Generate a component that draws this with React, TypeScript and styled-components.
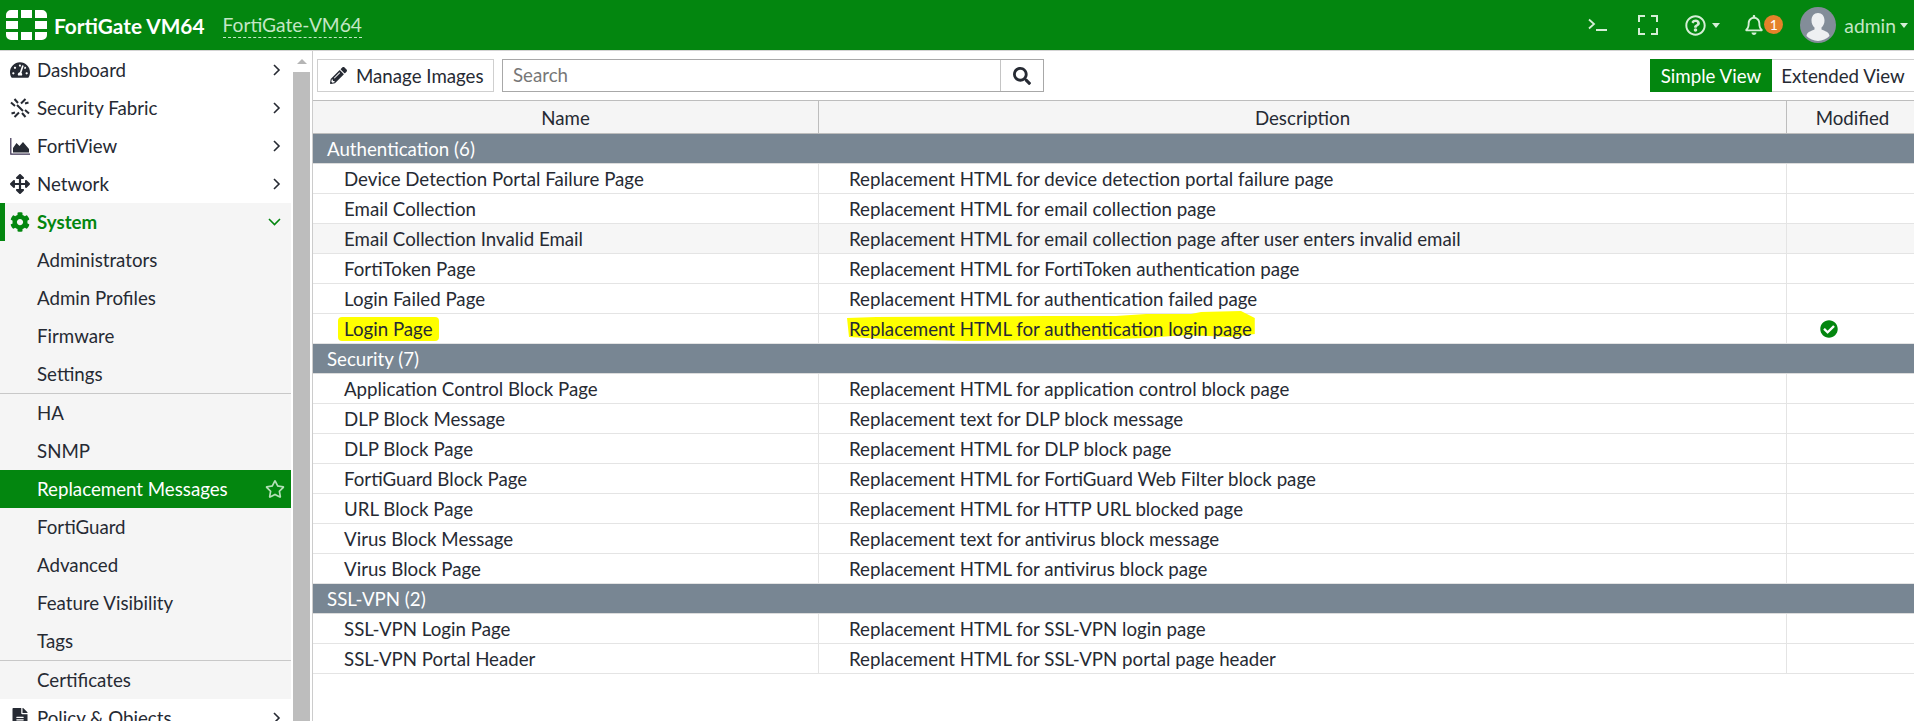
import React from 'react';
import styled, { createGlobalStyle } from 'styled-components';
import {
  FaArrowsAlt,
  FaCheckCircle,
  FaCog,
  FaFileAlt,
  FaPencilAlt,
  FaRegBell,
  FaRegQuestionCircle,
  FaRegStar,
  FaSearch,
  FaTachometerAlt,
} from 'react-icons/fa';

const GREEN = '#03860f';
const TEXT = '#262a33';

const GlobalStyle = createGlobalStyle`
  html, body {
    margin: 0;
    padding: 0;
    height: 100%;
    overflow: hidden;
    background: #fff;
    font-family: Lato, "Liberation Sans", sans-serif;
    font-size: 18.7px;
    color: ${TEXT};
  }
`;

const Page = styled.div`
  display: flex;
  flex-direction: column;
  width: 1914px;
  height: 721px;
  overflow: hidden;
`;

const TopBar = styled.header`
  display: flex;
  align-items: center;
  flex: 0 0 51px;
  box-sizing: border-box;
  padding: 0 6px 0 6px;
  background: ${GREEN};
  color: #c4e6c6;
  border-bottom: 1px solid #d4d4d4;
`;

const Logo = styled.svg`
  width: 41px;
  height: 30px;
  margin-right: 7px;
  fill: #fff;
`;

const Product = styled.span`
  font-weight: 700;
  font-size: 20.8px;
  color: #fff;
  margin-right: 18px;
`;

const Hostname = styled.span`
  font-size: 19.2px;
  color: #c4e6c6;
  padding-bottom: 1px;
  border-bottom: 1px dashed #c4e6c6;
`;

const TopActions = styled.div`
  display: flex;
  align-items: center;
  margin-left: auto;
`;

const TopIcon = styled.span<{ $w: number }>`
  display: flex;
  align-items: center;
  width: ${(p) => p.$w}px;
`;

const Caret = styled.span<{ $gap?: number }>`
  display: inline-block;
  margin-left: ${(p) => p.$gap ?? 0}px;
  border-left: 4.5px solid transparent;
  border-right: 4.5px solid transparent;
  border-top: 5px solid #d5eed6;
`;

const Badge = styled.span`
  position: absolute;
  left: 20px;
  top: 0;
  width: 19px;
  height: 19px;
  border-radius: 50%;
  background: #e5822a;
  color: #fff;
  font-size: 14px;
  line-height: 19px;
  text-align: center;
`;

const BellWrap = styled.span`
  position: relative;
  display: flex;
  width: 56px;
`;

const Avatar = styled.svg`
  width: 36px;
  height: 36px;
  margin-right: 8px;
`;

const AdminName = styled.span`
  font-size: 19.3px;
  margin-right: 4px;
  color: #c4e6c6;
`;

const Body = styled.div`
  display: flex;
  flex: 1;
  min-height: 0;
`;

const Sidebar = styled.nav`
  flex: 0 0 291px;
  overflow: hidden;
`;

const NavItem = styled.div<{ $open?: boolean; $sub?: boolean; $active?: boolean }>`
  display: flex;
  align-items: center;
  height: 38px;
  padding: ${(p) => (p.$sub ? '0 6px 0 37px' : '0 10px 0 10px')};
  background: ${(p) => (p.$active ? GREEN : p.$sub || p.$open ? '#f5f5f5' : '#fff')};
  color: ${(p) => (p.$active ? '#fff' : p.$open ? GREEN : TEXT)};
  font-weight: ${(p) => (p.$open ? 700 : 400)};
  ${(p) => p.$open && `box-shadow: inset 5px 0 0 ${GREEN};`}
`;

const SubDivider = styled.div`
  height: 1px;
  background: #c8c8c8;
`;

const NavIcon = styled.span`
  display: flex;
  justify-content: center;
  width: 20px;
  margin-right: 7px;
  font-size: 20px;
`;

const NavTail = styled.span`
  display: flex;
  margin-left: auto;
`;

const StarIcon = styled(FaRegStar)`
  font-size: 20px;
  color: #b5e0b8;
`;

const ScrollTrack = styled.div`
  display: flex;
  flex-direction: column;
  flex: 0 0 22px;
  box-sizing: border-box;
  padding: 0 2px;
  border-right: 1px solid #cccccc;
`;

const ScrollArrow = styled.div`
  display: flex;
  justify-content: center;
  align-items: center;
  height: 21px;
  &::before {
    content: '';
    border-left: 5px solid transparent;
    border-right: 5px solid transparent;
    border-bottom: 5px solid #b5b5b5;
  }
`;

const ScrollThumb = styled.div`
  flex: 1;
  background: #bdbdbd;
`;

const Content = styled.main`
  flex: 1;
  min-width: 0;
  display: flex;
  flex-direction: column;
`;

const Toolbar = styled.div`
  display: flex;
  align-items: center;
  height: 49px;
  padding: 0 0 0 4px;
  gap: 8px;
`;

const ToolButton = styled.button`
  display: flex;
  align-items: center;
  gap: 9px;
  height: 33px;
  width: 177px;
  padding: 0 0 0 12px;
  background: #fff;
  border: 1px solid #cfcfcf;
  color: ${TEXT};
  font: inherit;
  white-space: nowrap;
`;

const SearchBox = styled.div`
  display: flex;
  height: 33px;
  width: 542px;
  box-sizing: border-box;
  border: 1px solid #a8a8a8;
`;

const SearchInput = styled.div`
  flex: 1;
  padding-left: 10px;
  line-height: 31px;
  color: #777;
`;

const SearchButton = styled.div`
  display: flex;
  align-items: center;
  justify-content: center;
  width: 42px;
  border-left: 1px solid #c4c4c4;
  color: ${TEXT};
  font-size: 18px;
`;

const ViewSwitch = styled.div`
  display: flex;
  margin-left: auto;
  height: 33px;
`;

const ViewTab = styled.div<{ $on?: boolean }>`
  display: flex;
  align-items: center;
  justify-content: center;
  box-sizing: border-box;
  width: ${(p) => (p.$on ? 122 : 142)}px;
  background: ${(p) => (p.$on ? GREEN : '#fff')};
  color: ${(p) => (p.$on ? '#fff' : TEXT)};
  border: ${(p) => (p.$on ? 'none' : '1px solid #cfcfcf')};
  border-left: none;
  border-right: none;
`;

const Cols = styled.div`
  display: grid;
  grid-template-columns: 506px 968px 127px;
`;

const HeadRow = styled(Cols)`
  height: 34px;
  box-sizing: border-box;
  background: #f5f5f5;
  border-top: 1px solid #bdbdbd;
  border-bottom: 1px solid #bdbdbd;
`;

const HeadCell = styled.div<{ $last?: boolean }>`
  display: flex;
  align-items: center;
  justify-content: center;
  padding-top: 1px;
  padding-left: ${(p) => (p.$last ? 4 : 0)}px;
  border-right: ${(p) => (p.$last ? 'none' : '1px solid #bdbdbd')};
`;

const GroupRow = styled.div`
  box-sizing: border-box;
  height: 30px;
  padding-left: 14px;
  line-height: 31px;
  background: #788693;
  color: #fff;
  border-bottom: 1px solid #dcdcdc;
`;

const DataRow = styled(Cols)<{ $alt?: boolean }>`
  box-sizing: border-box;
  height: 30px;
  background: ${(p) => (p.$alt ? '#f6f6f6' : '#fff')};
  border-bottom: 1px solid #e4e4e4;
`;

const DataCell = styled.div<{ $pad?: number; $last?: boolean }>`
  display: flex;
  align-items: center;
  padding-top: 1px;
  padding-left: ${(p) => p.$pad ?? 0}px;
  border-right: ${(p) => (p.$last ? 'none' : '1px solid #e4e4e4')};
`;

// hand-painted yellow marker sitting behind the text, as in the annotated screenshot
const Marker = styled.span`
  position: relative;
  isolation: isolate;
  &::before {
    content: '';
    position: absolute;
    z-index: -1;
    inset: -1px -6px -1px -6px;
    background: #ffff00;
    border-radius: 4px;
  }
`;

const WavyMarker = styled.span`
  position: relative;
  isolation: isolate;
  &::before {
    content: '';
    position: absolute;
    z-index: -1;
    top: -8px;
    bottom: -3px;
    left: -3px;
    right: -3px;
    background: #ffff00;
    clip-path: polygon(1px 8px, 30px 7px, 200px 6px, 270px 6px, 300px 4px, 345px 4px, 355px 2px, 395px 1px, 100% 8px, 100% 24px, 385px 27px, 340px 25px, 300px 28px, 240px 30px, 120px 31px, 40px 29px, 3px 27px);
  }
`;

const ModifiedOk = styled.span`
  display: flex;
  margin-left: 33px;
  color: ${GREEN};
  font-size: 18px;
`;

const Chevron = ({ open }: { open?: boolean }) =>
  open ? (
    <svg width="13" height="8" viewBox="0 0 13 8" fill="none" stroke="currentColor" strokeWidth="1.600">
      <path d="M1 1l5.500 5.500L12 1" />
    </svg>
  ) : (
    <svg width="8" height="12" viewBox="0 0 8 12" fill="none" stroke="currentColor" strokeWidth="1.600">
      <path d="M1 1l5 5-5 5" />
    </svg>
  );

const FabricIcon = () => (
  <svg width="20" height="20" viewBox="0 0 20 20" fill="none" stroke="currentColor" strokeWidth="2">
    <path d="M15.500 1L11 5.500M9 14.500L4.500 19M1 4.500L5 8M15 12l4 3.500M4.500 1L8 5M12 15l3.500 4M7 7l6 6M15 5.500l3.500-1M1.500 15.500L5 14.500" />
  </svg>
);

const ChartIcon = () => (
  <svg width="20" height="17" viewBox="0 0 20 17">
    <path d="M.8 0v16.200H20" fill="none" stroke="#3a3050" strokeWidth="1.200" />
    <path d="M3 14.500V10l3.500-5 3 3 3.500-4 6 7v3.500z" fill="currentColor" />
  </svg>
);

const TerminalIcon = () => (
  <svg width="20" height="14" viewBox="0 0 20 14" fill="none" stroke="#d5eed6" strokeWidth="1.800">
    <path d="M1 1.500l5 4.500-5 4.500M8 12h11" />
  </svg>
);

const FullscreenIcon = () => (
  <svg width="20" height="20" viewBox="0 0 20 20" fill="none" stroke="#d5eed6" strokeWidth="2">
    <path d="M7 1H1v6M13 1h6v6M7 19H1v-6M13 19h6v-6" />
  </svg>
);

type NavEntry = {
  label: string;
  icon?: React.ReactNode;
  open?: boolean;
  active?: boolean;
  sub?: boolean;
  dividerBefore?: boolean;
};

const navItems: NavEntry[] = [
  { label: 'Dashboard', icon: <FaTachometerAlt /> },
  { label: 'Security Fabric', icon: <FabricIcon /> },
  { label: 'FortiView', icon: <ChartIcon /> },
  { label: 'Network', icon: <FaArrowsAlt /> },
  { label: 'System', icon: <FaCog />, open: true },
  { label: 'Administrators', sub: true },
  { label: 'Admin Profiles', sub: true },
  { label: 'Firmware', sub: true },
  { label: 'Settings', sub: true },
  { label: 'HA', sub: true, dividerBefore: true },
  { label: 'SNMP', sub: true },
  { label: 'Replacement Messages', sub: true, active: true },
  { label: 'FortiGuard', sub: true },
  { label: 'Advanced', sub: true },
  { label: 'Feature Visibility', sub: true },
  { label: 'Tags', sub: true },
  { label: 'Certificates', sub: true, dividerBefore: true },
  { label: 'Policy & Objects', icon: <FaFileAlt /> },
];

type Message = { name: string; description: string; alt?: boolean; marked?: boolean };
type Group = { title: string; rows: Message[] };

const groups: Group[] = [
  {
    title: 'Authentication (6)',
    rows: [
      { name: 'Device Detection Portal Failure Page', description: 'Replacement HTML for device detection portal failure page' },
      { name: 'Email Collection', description: 'Replacement HTML for email collection page' },
      { name: 'Email Collection Invalid Email', description: 'Replacement HTML for email collection page after user enters invalid email', alt: true },
      { name: 'FortiToken Page', description: 'Replacement HTML for FortiToken authentication page' },
      { name: 'Login Failed Page', description: 'Replacement HTML for authentication failed page' },
      { name: 'Login Page', description: 'Replacement HTML for authentication login page', marked: true },
    ],
  },
  {
    title: 'Security (7)',
    rows: [
      { name: 'Application Control Block Page', description: 'Replacement HTML for application control block page' },
      { name: 'DLP Block Message', description: 'Replacement text for DLP block message' },
      { name: 'DLP Block Page', description: 'Replacement HTML for DLP block page' },
      { name: 'FortiGuard Block Page', description: 'Replacement HTML for FortiGuard Web Filter block page' },
      { name: 'URL Block Page', description: 'Replacement HTML for HTTP URL blocked page' },
      { name: 'Virus Block Message', description: 'Replacement text for antivirus block message' },
      { name: 'Virus Block Page', description: 'Replacement HTML for antivirus block page' },
    ],
  },
  {
    title: 'SSL-VPN (2)',
    rows: [
      { name: 'SSL-VPN Login Page', description: 'Replacement HTML for SSL-VPN login page' },
      { name: 'SSL-VPN Portal Header', description: 'Replacement HTML for SSL-VPN portal page header' },
    ],
  },
];

const App = () => (
  <Page>
    <GlobalStyle />
    <TopBar>
      <Logo viewBox="0 0 41 30">
        <path d="M0 5a5 5 0 0 1 5-5h7v8H0zM15 0h11v8H15zM29 0h7a5 5 0 0 1 5 5v3H29zM0 11h12v8H0zM29 11h12v8H29zM0 22h12v8H5a5 5 0 0 1-5-5zM15 22h11v8H15zM29 22h12v3a5 5 0 0 1-5 5h-7z" />
      </Logo>
      <Product>FortiGate VM64</Product>
      <Hostname>FortiGate-VM64</Hostname>
      <TopActions>
        <TopIcon $w={50}>
          <TerminalIcon />
        </TopIcon>
        <TopIcon $w={47}>
          <FullscreenIcon />
        </TopIcon>
        <TopIcon $w={59}>
          <FaRegQuestionCircle size={21} color="#d5eed6" />
          <Caret $gap={6} />
        </TopIcon>
        <BellWrap>
          <FaRegBell size={20} color="#d5eed6" />
          <Badge>1</Badge>
        </BellWrap>
        <Avatar viewBox="0 0 36 36">
          <circle cx="18" cy="18" r="18" fill="#838d99" />
          <path d="M18 6c4 0 6.500 3 6.500 7.500 0 3-1.200 5.500-3 7v2c3 1.500 8 2.500 8 6.500a16 16 0 0 1-23 0c0-4 5-5 8-6.500v-2c-1.800-1.500-3-4-3-7C11.500 9 14 6 18 6z" fill="#eef0f2" />
        </Avatar>
        <AdminName>admin</AdminName>
        <Caret />
      </TopActions>
    </TopBar>
    <Body>
      <Sidebar>
        {navItems.map((item) => (
          <React.Fragment key={item.label}>
            {item.dividerBefore && <SubDivider />}
            <NavItem $sub={item.sub} $open={item.open} $active={item.active}>
              {item.icon && <NavIcon>{item.icon}</NavIcon>}
              {item.label}
              {item.active && (
                <NavTail>
                  <StarIcon />
                </NavTail>
              )}
              {!item.sub && (
                <NavTail>
                  <Chevron open={item.open} />
                </NavTail>
              )}
            </NavItem>
          </React.Fragment>
        ))}
      </Sidebar>
      <ScrollTrack>
        <ScrollArrow />
        <ScrollThumb />
      </ScrollTrack>
      <Content>
        <Toolbar>
          <ToolButton>
            <FaPencilAlt size={17} />
            Manage Images
          </ToolButton>
          <SearchBox>
            <SearchInput>Search</SearchInput>
            <SearchButton>
              <FaSearch />
            </SearchButton>
          </SearchBox>
          <ViewSwitch>
            <ViewTab $on>Simple View</ViewTab>
            <ViewTab>Extended View</ViewTab>
          </ViewSwitch>
        </Toolbar>
        <HeadRow>
          <HeadCell>Name</HeadCell>
          <HeadCell>Description</HeadCell>
          <HeadCell $last>Modified</HeadCell>
        </HeadRow>
        {groups.map((group) => (
          <React.Fragment key={group.title}>
            <GroupRow>{group.title}</GroupRow>
            {group.rows.map((row) => (
              <DataRow key={row.name} $alt={row.alt}>
                <DataCell $pad={31}>{row.marked ? <Marker>{row.name}</Marker> : row.name}</DataCell>
                <DataCell $pad={30}>
                  {row.marked ? <WavyMarker>{row.description}</WavyMarker> : row.description}
                </DataCell>
                <DataCell $last>
                  {row.marked && (
                    <ModifiedOk>
                      <FaCheckCircle />
                    </ModifiedOk>
                  )}
                </DataCell>
              </DataRow>
            ))}
          </React.Fragment>
        ))}
      </Content>
    </Body>
  </Page>
);

export default App;
